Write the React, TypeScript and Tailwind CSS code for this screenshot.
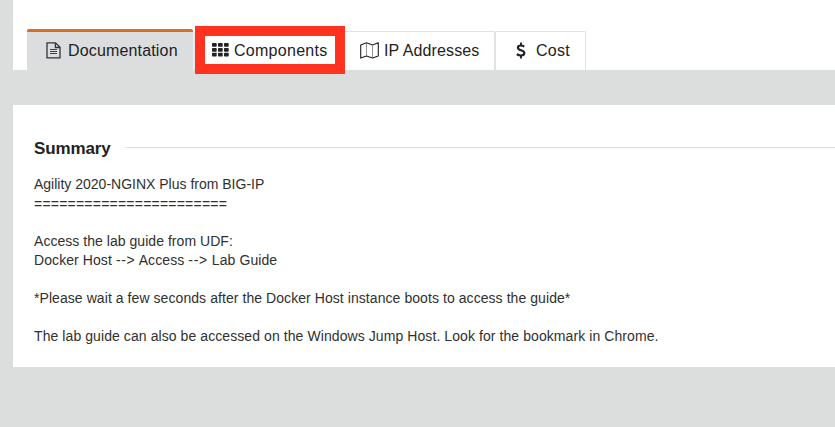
import type { ReactNode } from "react";

const DocIcon = () => (
  <svg className="block h-[17px] w-[15px]" viewBox="0 0 15 17" fill="none" stroke="#333" strokeWidth="1.3">
    <path d="M1 .9h8.6l4.4 4.4v10.6H1z" strokeLinejoin="round" />
    <path d="M9.4 1v4.5h4.5" />
    <path d="M4 7.5h7M4 9.5h7M4 11.5h7" strokeWidth="1" stroke="#444" />
  </svg>
);

const GridIcon = () => (
  <svg className="block h-[14px] w-[17px]" viewBox="0 0 17 14" fill="#222">
    {[0, 5, 9.8].map((y) =>
      [0, 6, 12].map((x) => <rect key={`${x}-${y}`} x={x} y={y} width="4.7" height="3.7" rx=".8" />),
    )}
  </svg>
);

const MapIcon = () => (
  <svg className="block h-[17px] w-[19px]" viewBox="0 0 19 17" fill="none" stroke="#222" strokeWidth="1.1" strokeLinejoin="round">
    <path d="M.7 2.9 6.5.8l6 2.1L18.3.8v13.2l-5.8 2.1-6-2.1-5.8 2.1z" />
    <path d="M6.5.8v13.2M12.5 2.9v13.2" strokeWidth=".8" stroke="#777" />
  </svg>
);

const DollarIcon = () => (
  <svg className="block h-[17px] w-[10px]" viewBox="0 0 10 17" fill="none" stroke="#222" strokeWidth="2.2">
    <path d="M8.3 4.6C7.2 3.9 6.1 3.5 4.8 3.5 3.1 3.5 1.9 4.3 1.9 5.7c0 3.1 6.4 2 6.4 5.3 0 1.6-1.4 2.5-3.4 2.5-1.6 0-3-.5-4.1-1.4" />
    <path d="M5 .4v3M5 13.4v3" strokeWidth="1.9" />
  </svg>
);

const Label = ({ children, className }: { children: ReactNode; className: string }) => (
  <span className={`whitespace-nowrap text-[16px] leading-[20px] text-[#222] ${className}`}>{children}</span>
);

const Arrow = () => <span className="tracking-[0.7px]">--&gt;</span>;

const lines: { text: ReactNode; cls: string }[] = [
  { text: "Agility 2020-NGINX Plus from BIG-IP", cls: "" },
  { text: "=======================", cls: "relative top-px tracking-[0.22px]" },
  { text: "\u00a0", cls: "" },
  { text: "Access the lab guide from UDF:", cls: "tracking-[0.04px]" },
  { text: <>Docker Host <Arrow /> Access <Arrow /> Lab Guide</>, cls: "tracking-[0.08px]" },
  { text: "\u00a0", cls: "" },
  { text: "*Please wait a few seconds after the Docker Host instance boots to access the guide*", cls: "tracking-[0.067px]" },
  { text: "\u00a0", cls: "" },
  { text: "The lab guide can also be accessed on the Windows Jump Host. Look for the bookmark in Chrome.", cls: "tracking-[0.08px]" },
];

export default function App() {
  return (
    <div className="h-[427px] w-[835px] overflow-hidden bg-[#dcdedd] pl-[13px] font-['Liberation_Sans',Arial,sans-serif]">
      <header className="h-[70px] bg-white pl-[14px] pt-[29px]">
        <nav className="flex h-[45px] items-start">
          <div className="flex h-[41px] w-[166px] items-center rounded-t-[2px] border-t-[3px] border-[#d66f28] bg-[#dcdddf] pb-px pl-[19px]">
            <DocIcon />
            <Label className="ml-[7px] tracking-[0.16px]">Documentation</Label>
          </div>
          <div className="mt-[3px] h-[38px] w-[2px] border-r border-[#e4e4e4] bg-[#f0f0f0]" />
          <div className="relative z-10 -mt-[3px] flex h-[48px] w-[150px] items-center border-[10px] border-[#ff3320] bg-white pl-[7px]">
            <span className="-mt-px"><GridIcon /></span>
            <Label className="ml-[5px] pt-[2px] tracking-[0.28px]">Components</Label>
          </div>
          <div className="mt-[2px] flex h-[39px] w-[150px] items-center rounded-tr-[2px] border-r border-t border-[#e2e2e2] pl-[15px]">
            <span className="-mt-px"><MapIcon /></span>
            <Label className="ml-[5px] tracking-[0.12px]">IP Addresses</Label>
          </div>
          <div className="mt-[2px] flex h-[39px] w-[91px] items-center rounded-t-[2px] border-x border-t border-[#e2e2e2] pl-[20px]">
            <span className="-mt-px"><DollarIcon /></span>
            <Label className="ml-[10px] tracking-[0.3px]">Cost</Label>
          </div>
        </nav>
      </header>
      <main className="mt-[35px] h-[262px] bg-white pl-[21px] pt-[32px]">
        <div className="flex items-start">
          <h2 className="w-[91px] pt-px text-[17px] font-bold leading-[22px] tracking-[-0.12px] text-[#222]">Summary</h2>
          <div className="mt-[10px] h-px flex-1 bg-[#dcdcdc]" />
        </div>
        <div className="mt-[15px] whitespace-nowrap text-[14px] leading-[19px] text-[#303030]">
          {lines.map((l, i) => (
            <p key={i} className={l.cls}>{l.text}</p>
          ))}
        </div>
      </main>
    </div>
  );
}
